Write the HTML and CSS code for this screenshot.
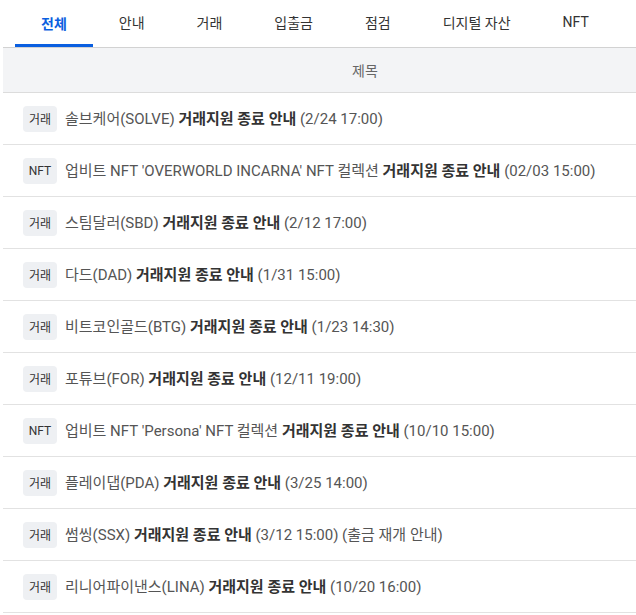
FILE: index.html
```html
<!DOCTYPE html>
<html lang="ko">
<head>
<meta charset="utf-8">
<link rel="stylesheet" href="styles.css">
</head>
<body>
<div class="page">
  <nav class="tabs">
    <a class="tab active">전체</a>
    <a class="tab">안내</a>
    <a class="tab">거래</a>
    <a class="tab">입출금</a>
    <a class="tab">점검</a>
    <a class="tab">디지털 자산</a>
    <a class="tab">NFT</a>
  </nav>
  <div class="table">
    <div class="thead"><span class="th">제목</span></div>
    <div class="row"><span class="badge">거래</span><span class="title">솔브케어(SOLVE) <b>거래지원 종료 안내</b> (2/24 17:00)</span></div>
    <div class="row"><span class="badge">NFT</span><span class="title">업비트 NFT 'OVERWORLD INCARNA' NFT 컬렉션 <b>거래지원 종료 안내</b> (02/03 15:00)</span></div>
    <div class="row"><span class="badge">거래</span><span class="title">스팀달러(SBD) <b>거래지원 종료 안내</b> (2/12 17:00)</span></div>
    <div class="row"><span class="badge">거래</span><span class="title">다드(DAD) <b>거래지원 종료 안내</b> (1/31 15:00)</span></div>
    <div class="row"><span class="badge">거래</span><span class="title">비트코인골드(BTG) <b>거래지원 종료 안내</b> (1/23 14:30)</span></div>
    <div class="row"><span class="badge">거래</span><span class="title">포튜브(FOR) <b>거래지원 종료 안내</b> (12/11 19:00)</span></div>
    <div class="row"><span class="badge">NFT</span><span class="title">업비트 NFT 'Persona' NFT 컬렉션 <b>거래지원 종료 안내</b> (10/10 15:00)</span></div>
    <div class="row"><span class="badge">거래</span><span class="title">플레이댑(PDA) <b>거래지원 종료 안내</b> (3/25 14:00)</span></div>
    <div class="row"><span class="badge">거래</span><span class="title">썸씽(SSX) <b>거래지원 종료 안내</b> (3/12 15:00) (출금 재개 안내)</span></div>
    <div class="row"><span class="badge">거래</span><span class="title">리니어파이낸스(LINA) <b>거래지원 종료 안내</b> (10/20 16:00)</span></div>
  </div>
</div>
</body>
</html>
```
FILE: styles.css
```css
html, body {
  margin: 0;
  padding: 0;
  background: #fff;
}
body {
  font-family: Roboto, "Noto Sans CJK KR", sans-serif;
  color: #333;
  overflow: hidden;
}
.page {
  padding-left: 3px;
}
.tabs {
  display: flex;
  height: 47px;
  padding-left: 12px;
}
.tab {
  display: flex;
  align-items: center;
  justify-content: center;
  padding: 2px 26px 3px;
  font-size: 14px;
  color: #333;
  box-sizing: border-box;
  border-bottom: 3px solid transparent;
}
.tab.active {
  color: #0a5fe0;
  font-weight: 700;
  border-bottom-color: #0a5fe0;
  padding-bottom: 0;
}
.table {
  width: 633px;
}
.thead {
  height: 44px;
  background: #f3f4f6;
  border-top: 1px solid #d2d2d2;
  border-bottom: 1px solid #dcdcdc;
  display: flex;
  align-items: center;
  padding-left: 349px;
}
.th {
  font-size: 14px;
  color: #666;
}
.row {
  display: flex;
  align-items: center;
  gap: 8px;
  height: 51px;
  border-bottom: 1px solid #e2e2e2;
  padding-left: 20px;
}
.badge {
  min-width: 34px;
  height: 26px;
  box-sizing: border-box;
  display: flex;
  align-items: center;
  justify-content: center;
  background: #eef0f3;
  border-radius: 4px;
  font-size: 12px;
  color: #333;
}
.title {
  font-size: 15px;
  line-height: 20px;
  color: #555;
  white-space: nowrap;
}
.title b {
  color: #333;
  font-weight: 700;
}
```
